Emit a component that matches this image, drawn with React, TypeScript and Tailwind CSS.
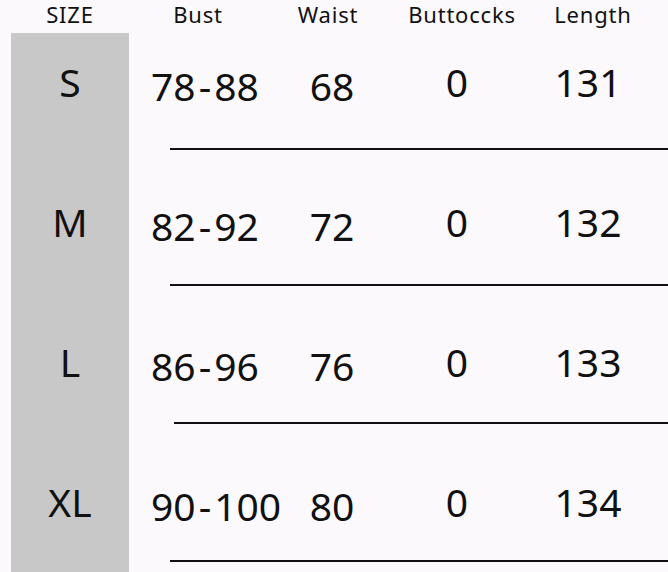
import React from "react";

const rows = [
  { size: "S", bust: ["78", "88"], waist: "68", butt: "0", len: "131", pt: "pt-[25px]", gap: "mb-[38px]", ml: "ml-[41px]", pb: "" },
  { size: "M", bust: ["82", "92"], waist: "72", butt: "0", len: "132", pt: "pt-[48px]", gap: "mb-[34px]", ml: "ml-[41px]", pb: "" },
  { size: "L", bust: ["86", "96"], waist: "76", butt: "0", len: "133", pt: "pt-[52px]", gap: "mb-[32px]", ml: "ml-[45px]", pb: "" },
  { size: "XL", bust: ["90", "100"], waist: "80", butt: "0", len: "134", pt: "pt-[54px]", gap: "mb-[30px]", ml: "ml-[41px]", pb: "pb-[12px]" },
];

const App: React.FC = () => {
  return (
    <div className="w-[668px] h-[572px] overflow-hidden bg-[#fbf9fc] text-[#111] font-['Noto_Sans',sans-serif]">
      {/* header */}
      <div className="flex h-[33px] items-center text-[22px] tracking-[0.8px] leading-none pb-[6px]">
        <div className="w-[11px]" />
        <div className="w-[118px] text-center">SIZE</div>
        <div className="w-[138px] text-center">Bust</div>
        <div className="w-[122px] text-center">Waist</div>
        <div className="w-[146px] text-center">Buttoccks</div>
        <div className="w-[116px] text-center">Length</div>
      </div>

      {rows.map((r) => (
        <div key={r.size} className="flex">
          <div className="w-[11px]" />
          <div className={`w-[118px] bg-[#c8c8c8] ${r.pt}`}>
            <div className="h-[48px] leading-[48px] text-[39px] text-center">{r.size}</div>
          </div>
          <div className={`flex-1 flex flex-col ${r.pt} ${r.pb}`}>
            <div className={`flex items-start text-[39px] ${r.gap}`}>
              <div className="w-[161px] pl-[22px] pt-[4px] h-[52px] leading-[48px] whitespace-nowrap">
                {r.bust[0]}
                <span className="mx-[3px]">-</span>
                {r.bust[1]}
              </div>
              <div className="w-[84px] pt-[4px] h-[52px] leading-[48px] text-center">{r.waist}</div>
              <div className="w-[166px] h-[48px] leading-[48px] text-center">{r.butt}</div>
              <div className="w-[96px] h-[48px] leading-[48px] text-center">{r.len}</div>
            </div>
            <div className={`h-[2px] bg-[#111] ${r.ml}`} />
          </div>
        </div>
      ))}
    </div>
  );
};

export default App;
